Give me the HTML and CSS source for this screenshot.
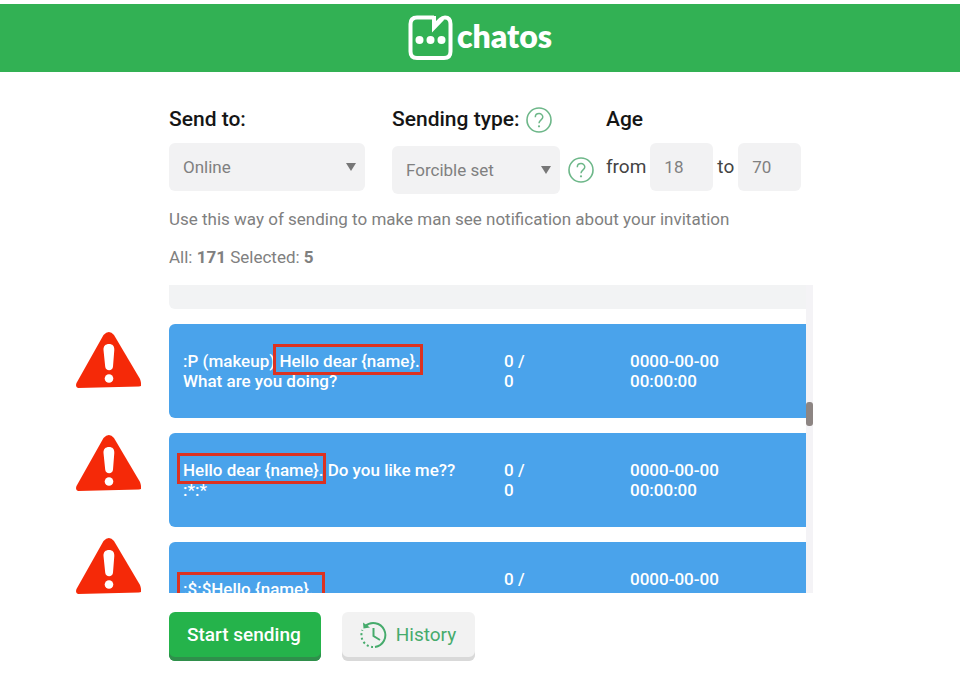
FILE: index.html
```html
<!DOCTYPE html>
<html lang="en">
<head>
<meta charset="utf-8">
<title>Chatos</title>
<link rel="stylesheet" href="styles.css">
</head>
<body>
<svg class="defs" width="0" height="0" aria-hidden="true">
  <symbol id="help" viewBox="0 0 26 26">
    <circle cx="13" cy="13" r="12" fill="none" stroke="#6db789" stroke-width="1.6"/>
    <path d="M9.300 10.200C9.300 5.400 16.800 5.400 16.800 10.100C16.800 13 13 12.800 13 16.300" fill="none" stroke="#6db789" stroke-width="1.500"/>
    <circle cx="13" cy="19.300" r="1.100" fill="#6db789"/>
  </symbol>
  <symbol id="warning" viewBox="0 0 65 56">
    <path d="M27.500 3Q33 -3 38 3L64 47Q65.500 51 65 54L63 54.600L2 56Q-1 55 .5 51Z" fill="#f52908"/>
    <path d="M33 12C36.500 12 38.500 14 38.300 18L37 34.500C36.800 39.500 29.500 39.500 29.200 34.500L27.500 18C27.300 14 29.500 12 33 12Z" fill="#fff"/>
    <circle cx="33" cy="46.500" r="4.300" fill="#fff"/>
  </symbol>
</svg>

<header class="topbar">
  <a class="brand" href="#">
    <svg class="brand-mark" viewBox="0 0 46 46" aria-hidden="true">
      <path d="M26 2.500H9Q2.500 2.500 2.500 9V36.500Q2.500 43 9 43H36Q42.500 43 42.500 36.500V9Q42.500 2.500 37 2.500Q34.500 2.500 32.500 4.500L26 11V2.500" fill="none" stroke="#fff" stroke-width="4"/>
      <path d="M24 1H28V9L34 2.500L36 5L24 17.500Z" fill="#fff"/>
      <circle cx="11.500" cy="25" r="4" fill="#fff"/>
      <circle cx="22.500" cy="25" r="4" fill="#fff"/>
      <circle cx="33.500" cy="25" r="4" fill="#fff"/>
    </svg>
    <span class="brand-name">chatos</span>
  </a>
</header>

<main class="page">
  <form class="filters">
    <div class="field">
      <label class="label" for="send-to">Send to:</label>
      <div class="select">
        <select id="send-to"><option>Online</option></select>
      </div>
    </div>
    <div class="field field-type">
      <div class="label-row">
        <label class="label" for="type">Sending type:</label>
        <svg class="help"><use href="#help"/></svg>
      </div>
      <div class="control-row">
        <div class="select">
          <select id="type"><option>Forcible set</option></select>
        </div>
        <svg class="help"><use href="#help"/></svg>
      </div>
    </div>
    <div class="field">
      <span class="label">Age</span>
      <div class="ages">
        <label for="age-from">from</label>
        <input id="age-from" type="text" value="18">
        <label for="age-to">to</label>
        <input id="age-to" type="text" value="70">
      </div>
    </div>
  </form>

  <p class="hint">Use this way of sending to make man see notification about your invitation</p>
  <p class="counts">All: <b>171</b> Selected: <b>5</b></p>

  <div class="warnings">
    <svg class="warning"><use href="#warning"/></svg>
    <svg class="warning"><use href="#warning"/></svg>
    <svg class="warning"><use href="#warning"/></svg>
  </div>

  <section class="list">
    <div class="list-body">
      <div class="row-end"></div>
      <table class="messages">
        <colgroup><col class="col-text"><col class="col-count"><col></colgroup>
        <tbody>
          <tr>
            <td>:P (makeup) <mark>Hello dear {name}.</mark><br>What are you doing?</td>
            <td>0 /<br>0</td>
            <td>0000-00-00<br>00:00:00</td>
          </tr>
          <tr>
            <td><mark>Hello dear {name}.</mark> Do you like me??<br>:*:*</td>
            <td>0 /<br>0</td>
            <td>0000-00-00<br>00:00:00</td>
          </tr>
          <tr>
            <td><mark class="wide">:$:$Hello {name}.</mark></td>
            <td>0 /<br>0</td>
            <td>0000-00-00<br>00:00:00</td>
          </tr>
        </tbody>
      </table>
    </div>
    <div class="track"><div class="thumb"></div></div>
  </section>

  <div class="actions">
    <button class="button primary" type="button">Start sending</button>
    <button class="button" type="button">
      <svg class="clock" viewBox="0 0 28 28" aria-hidden="true" fill="none" stroke="#46ab6c" stroke-width="2">
        <path d="M5 5.500A12 12 0 1 1 15 26"/>
        <path d="M13 26A12 12 0 0 1 2.500 9" stroke-dasharray="2 2.500"/>
        <path d="M13.500 7V15L20 19"/>
        <path d="M3 1.500L3.500 7.500L10 6.500Z" fill="#46ab6c" stroke="none"/>
      </svg>
      History
    </button>
  </div>
</main>
</body>
</html>
```
FILE: styles.css
```css
* {
  box-sizing: border-box;
}

body {
  margin: 0;
  padding-top: 4px;
  background: #fff;
  color: #222;
  font: 16px/20px Roboto, "Liberation Sans", sans-serif;
}

.defs {
  position: absolute;
}

.topbar {
  display: flex;
  justify-content: center;
  align-items: center;
  height: 68px;
  background: #32b154;
}

.brand {
  display: flex;
  align-items: center;
  gap: 3px;
  color: #fff;
  text-decoration: none;
}

.brand-mark {
  width: 46px;
  height: 46px;
}

.brand-name {
  padding-bottom: 4px;
  font: 800 32px/40px Lato, sans-serif;
}

.page {
  display: grid;
  grid-template-columns: 65px minmax(0, 1fr);
  column-gap: 28px;
  padding: 32px 147px 16px 76px;
}

.page > * {
  grid-column: 2;
}

.filters {
  display: grid;
  grid-template-columns: 196fr 217fr 207fr;
  column-gap: 12px;
}

.field-type {
  margin-left: 15px;
}

.label {
  display: block;
  font-size: 21px;
  line-height: 31px;
  font-weight: 500;
  color: #151515;
}

.field > .label {
  margin-bottom: 8px;
}

.label-row,
.control-row,
.ages {
  display: flex;
  align-items: center;
}

.label-row {
  gap: 6px;
  margin-bottom: 11px;
}

.control-row {
  gap: 8px;
}

.help {
  flex: none;
  width: 26px;
  height: 26px;
}

.select {
  position: relative;
  flex: 1;
}

.select::after {
  content: "";
  position: absolute;
  top: 20px;
  right: 9px;
  border: 5px solid transparent;
  border-top: 8px solid #777;
  border-bottom: 0;
}

.select select,
.ages input {
  width: 100%;
  height: 48px;
  padding: 0 14px;
  border: 0;
  border-radius: 6px;
  background: #f2f2f3;
  color: #808080;
  font: 17px/24px Roboto, sans-serif;
  appearance: none;
}

.ages {
  gap: 4px;
  font-size: 19px;
  color: #444;
}

.ages input {
  width: 63px;
}

.hint,
.counts {
  margin: 0;
  font-size: 17px;
  line-height: 22px;
  color: #808080;
}

.hint {
  margin-top: 14px;
}

.counts {
  margin-top: 16px;
  margin-bottom: 17px;
}

.page > .warnings {
  grid-column: 1;
  display: flex;
  flex-direction: column;
  gap: 47px;
  height: 308px;
  padding-top: 47px;
}

.warning {
  flex: none;
  width: 65px;
  height: 56px;
}

.list {
  grid-row: 4;
  display: flex;
  height: 308px;
  overflow: hidden;
}

.list-body {
  flex: 1;
}

.row-end {
  height: 24px;
  border-radius: 0 0 0 6px;
  background: #f2f3f4;
}

.track {
  width: 7px;
  padding-top: 117px;
  background: #f4f3f6;
}

.thumb {
  height: 24px;
  border-radius: 3px;
  background: #8d8583;
}

.messages {
  width: 100%;
  table-layout: fixed;
  border-spacing: 0 15px;
  color: #fff;
  font-size: 17px;
  line-height: 20px;
  font-weight: 500;
}

.col-text {
  width: 321px;
}

.col-count {
  width: 126px;
}

.messages td {
  height: 94px;
  padding: 0 0 0 14px;
  background: #4aa3eb;
}

.messages td:first-child {
  border-radius: 6px 0 0 6px;
}

mark {
  margin: 0 -3px 0 -6px;
  padding: 4px 0 1px 3px;
  border: 3px solid #dc3220;
  background: none;
  color: inherit;
}

mark.wide {
  padding-right: 8px;
}

.actions {
  display: flex;
  gap: 21px;
  margin-top: 19px;
}

.button {
  display: flex;
  align-items: center;
  gap: 8px;
  height: 49px;
  padding: 0 19px 4px 18px;
  border: 0;
  border-radius: 6px;
  background: #f2f2f2;
  box-shadow: inset 0 -4px #d9d9d9;
  color: #46ab6c;
  font: 19px/24px Roboto, sans-serif;
}

.button.primary {
  padding-right: 20px;
  background: #25b34b;
  box-shadow: inset 0 -4px #2f8f4b;
  color: #fff;
  font-weight: 500;
}

.clock {
  width: 28px;
  height: 28px;
}
```
